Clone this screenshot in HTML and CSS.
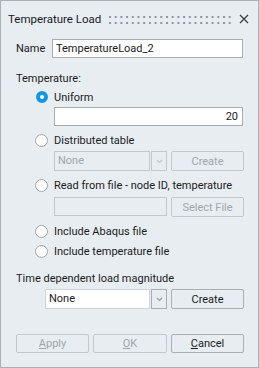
FILE: index.html
```html
<!DOCTYPE html>
<html lang="en">
  <head>
    <meta charset="UTF-8" />
    <title>Temperature Load</title>
    <link rel="stylesheet" href="styles.css">
  </head>
  <body>
    <div class="dialog">
      <div class="titlebar">
        <span class="title">Temperature Load</span>
        <svg class="grip" width="122" height="8">
          <pattern id="dots" width="5.7" height="6" patternUnits="userSpaceOnUse">
            <rect width="2" height="2" fill="#8e969c" />
          </pattern>
          <rect width="122" height="8" fill="url(#dots)" shape-rendering="crispEdges" />
        </svg>
        <svg class="close" width="10" height="10" viewBox="0 0 10 10">
          <path d="M1 1 L9 9 M9 1 L1 9" stroke="#3c3f42" stroke-width="1.3" fill="none" />
        </svg>
      </div>

      <div class="name-row">
        <label>Name</label>
        <div class="field name-field">TemperatureLoad_2</div>
      </div>

      <div class="section-label">Temperature:</div>

      <div class="radio-row uniform">
        <span class="radio checked"></span>
        <span>Uniform</span>
      </div>
      <div class="indent-row r-uniform">
        <div class="field value-field">20</div>
      </div>

      <div class="radio-row r-dist">
        <span class="radio"></span>
        <span>Distributed table</span>
      </div>
      <div class="indent-row r-select">
        <div class="combo disabled">
          <span class="combo-text">None</span>
          <span class="combo-arrow">
            <svg width="7" height="5" viewBox="0 0 7 5"><path d="M1 1 L3.5 3.5 L6 1" stroke="#c2c6ca" stroke-width="1.2" fill="none" /></svg>
          </span>
        </div>
        <button class="btn disabled">Create</button>
      </div>

      <div class="radio-row r-file">
        <span class="radio"></span>
        <span>Read from file - node ID, temperature</span>
      </div>
      <div class="indent-row r-filefield">
        <div class="field file-field disabled"></div>
        <button class="btn disabled">Select File</button>
      </div>

      <div class="radio-row r-abaqus">
        <span class="radio"></span>
        <span>Include Abaqus file</span>
      </div>
      <div class="radio-row r-tempfile">
        <span class="radio"></span>
        <span>Include temperature file</span>
      </div>

      <div class="section-label time-label">Time dependent load magnitude</div>
      <div class="time-row">
        <div class="combo time-combo">
          <span class="combo-text">None</span>
          <span class="combo-arrow">
            <svg width="7" height="5" viewBox="0 0 7 5"><path d="M1 1 L3.5 3.5 L6 1" stroke="#9aa0a6" stroke-width="1.2" fill="none" /></svg>
          </span>
        </div>
        <button class="btn">Create</button>
      </div>

      <div class="actions">
        <button class="btn disabled"><u>A</u>pply</button>
        <button class="btn disabled"><u>O</u>K</button>
        <button class="btn"><u>C</u>ancel</button>
      </div>
    </div>
  </body>
</html>
```

FILE: styles.css
```css
* {
  margin: 0;
  padding: 0;
  box-sizing: border-box;
}

:root {
  --bg: #e7edf1;
  --frame: #a9b0b6;
  --text: #1c1c1c;
  --muted: #a2a7ac;
  --field-border: #a9adb1;
  --soft-border: #c3c8cc;
  --blue: #1196e3;
}

body {
  background: var(--bg);
  font-family: Roboto, "Liberation Sans", sans-serif;
  font-size: 11px;
  color: var(--text);
}

.dialog {
  width: 259px;
  height: 368px;
  border: 1px solid var(--frame);
  background: var(--bg);
  white-space: nowrap;
}

/* Title bar */
.titlebar {
  display: flex;
  align-items: center;
  height: 20px;
  margin-top: 8px;
  padding-left: 7px;
}

.title {
  flex-shrink: 0;
  width: 101px;
  font-size: 11.5px;
  color: #1a1a24;
}

.grip {
  flex-shrink: 0;
  margin-top: 1px;
}

.close {
  flex-shrink: 0;
  margin-left: 8px;
}

/* Name */
.name-row {
  display: flex;
  align-items: center;
  height: 19px;
  margin-top: 10px;
  padding-left: 15px;
}

.name-row label {
  width: 36px;
}

.field {
  height: 19px;
  background: #fff;
  border: 1px solid var(--field-border);
  padding: 0 3px;
  line-height: 17px;
}

.name-field {
  width: 191px;
}

.section-label {
  height: 14px;
  line-height: 14px;
  margin-top: 14px;
  padding-left: 15px;
}

/* Radio options */
.radio-row {
  display: flex;
  align-items: center;
  height: 14px;
  padding-left: 34px;
}

.radio {
  flex-shrink: 0;
  width: 13px;
  height: 13px;
  border-radius: 50%;
  border: 1px solid #a3a8ad;
  background: #fff;
  margin-right: 6px;
}

.radio.checked {
  width: 12px;
  height: 12px;
  margin-left: 1px;
  border: 4px solid var(--blue);
  background: #fff;
}

.uniform { margin-top: 4px; }
.r-dist { margin-top: 7px; }
.r-file { margin-top: 7px; }
.r-abaqus { margin-top: 7px; }
.r-tempfile { margin-top: 6px; }

.indent-row {
  display: flex;
  gap: 4px;
  padding-left: 53px;
}

.r-uniform { margin-top: 3px; }
.r-select { margin-top: 4px; }
.r-filefield { margin-top: 5px; }

.value-field {
  width: 189px;
  text-align: right;
  padding-right: 4px;
}

.file-field {
  width: 113px;
}

.field.disabled {
  background: var(--bg);
  border-color: var(--soft-border);
}

/* Combo boxes */
.combo {
  display: flex;
  width: 113px;
  height: 20px;
}

.combo-text {
  flex: 1;
  background: #fff;
  border: 1px solid var(--soft-border);
  padding-left: 3px;
  line-height: 18px;
}

.combo-arrow {
  width: 16px;
  display: flex;
  align-items: center;
  justify-content: center;
  border: 1px solid var(--soft-border);
  margin-left: 1px;
}

.combo.disabled .combo-text {
  background: var(--bg);
  color: var(--muted);
}

/* Buttons */
.btn {
  width: 73px;
  height: 20px;
  background: var(--bg);
  border: 1px solid #a9aeb3;
  border-radius: 2px;
  font-family: inherit;
  font-size: 11px;
  color: var(--text);
}

.btn.disabled {
  color: var(--muted);
  border-color: var(--soft-border);
}

/* Time dependent */
.time-label {
  margin-top: 14px;
}

.time-row {
  display: flex;
  gap: 4px;
  margin-top: 3px;
  padding-left: 44px;
}

.time-combo {
  width: 122px;
}

.time-combo .combo-text {
  border-color: #d0d4d8;
}

.time-combo .combo-arrow {
  border-color: var(--field-border);
}

/* Dialog actions */
.actions {
  display: flex;
  gap: 4px;
  margin-top: 25px;
  padding-left: 15px;
}

.actions .btn {
  height: 19px;
}

.actions .btn:nth-child(2) {
  width: 74px;
}
```
